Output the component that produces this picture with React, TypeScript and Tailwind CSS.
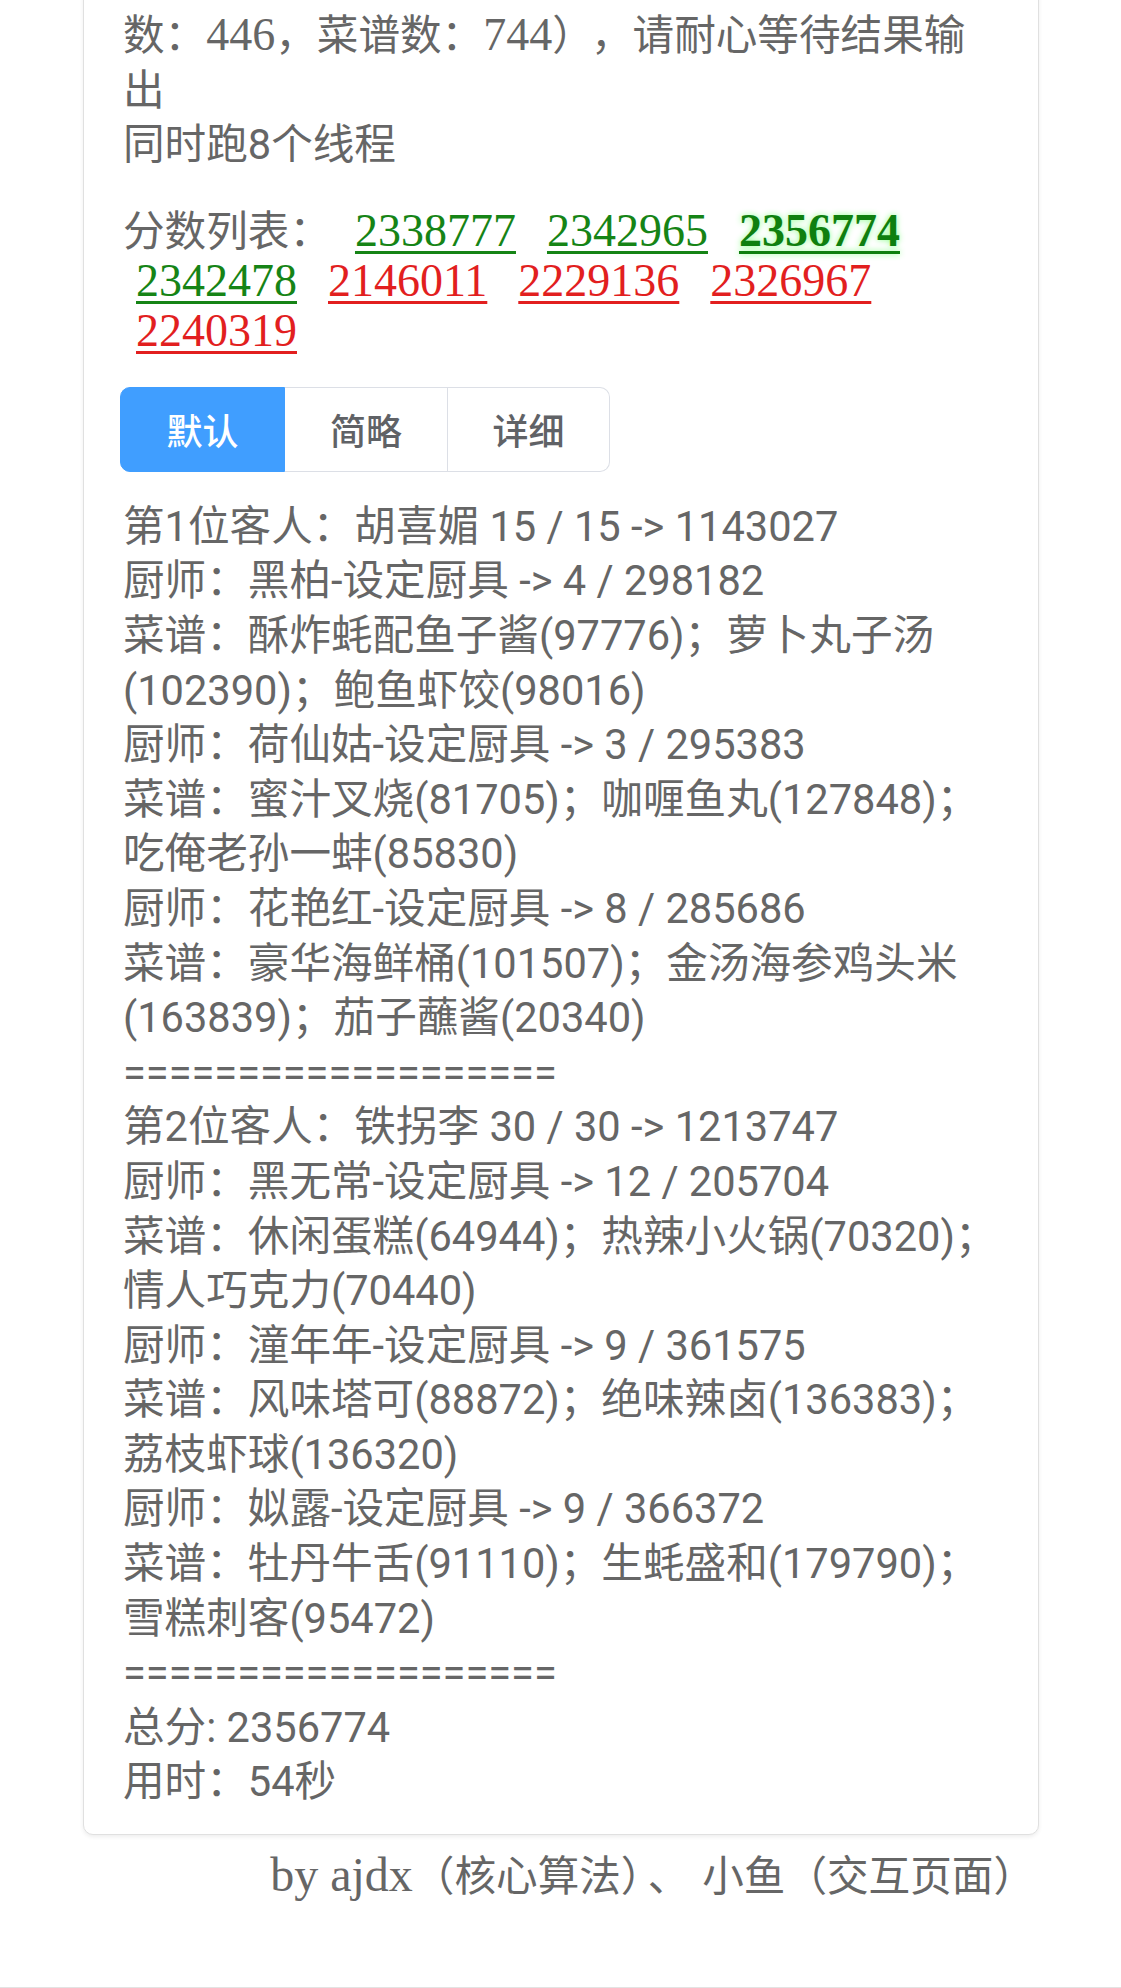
import React from "react";

const sans = "font-['Roboto','Noto_Sans_CJK_SC',sans-serif]";

type Score = { v: string; good: boolean; best?: boolean };

const scores: Score[] = [
  { v: "2338777", good: true },
  { v: "2342965", good: true },
  { v: "2356774", good: true, best: true },
  { v: "2342478", good: true },
  { v: "2146011", good: false },
  { v: "2229136", good: false },
  { v: "2326967", good: false },
  { v: "2240319", good: false },
];

const lines: string[] = [
  "第1位客人：胡喜媚 15 / 15 -> 1143027",
  "厨师：黑柏-设定厨具 -> 4 / 298182",
  "菜谱：酥炸蚝配鱼子酱(97776)；萝卜丸子汤",
  "(102390)；鲍鱼虾饺(98016)",
  "厨师：荷仙姑-设定厨具 -> 3 / 295383",
  "菜谱：蜜汁叉烧(81705)；咖喱鱼丸(127848)；",
  "吃俺老孙一蚌(85830)",
  "厨师：花艳红-设定厨具 -> 8 / 285686",
  "菜谱：豪华海鲜桶(101507)；金汤海参鸡头米",
  "(163839)；茄子蘸酱(20340)",
  "===================",
  "第2位客人：铁拐李 30 / 30 -> 1213747",
  "厨师：黑无常-设定厨具 -> 12 / 205704",
  "菜谱：休闲蛋糕(64944)；热辣小火锅(70320)；",
  "情人巧克力(70440)",
  "厨师：潼年年-设定厨具 -> 9 / 361575",
  "菜谱：风味塔可(88872)；绝味辣卤(136383)；",
  "荔枝虾球(136320)",
  "厨师：姒露-设定厨具 -> 9 / 366372",
  "菜谱：牡丹牛舌(91110)；生蚝盛和(179790)；",
  "雪糕刺客(95472)",
  "===================",
  "总分: 2356774",
  "用时：54秒",
];

export default function App() {
  return (
    <div className="w-[1121px] h-[1988px] overflow-hidden bg-white flex flex-col text-[#666666]">
      <div className="ml-[83px] w-[956px] -mt-[31px] border border-[#e0e0e0] rounded-[10px] shadow-[0_2px_4px_rgba(0,0,0,0.07)] px-[39px] pt-[39px] pb-[24px] bg-white">
        <div className="font-['Liberation_Serif','Noto_Sans_CJK_SC',serif] text-[41.6px] leading-[54.6px] whitespace-nowrap">
          <div>
            数：<span className="text-[46px] leading-[0]">446</span>，菜谱数：
            <span className="text-[46px] leading-[0]">744</span>）<span className="ml-[18px]">，请耐心等待结果输</span>
          </div>
          <div>出</div>
        </div>
        <div className={`${sans} text-[41.6px] leading-[54.6px] whitespace-nowrap`}>同时跑8个线程</div>

        <div className={`${sans} mt-[33px] text-[41.6px] leading-[49px]`}>
          <span className="mr-[11px]">分数列表：</span>
          {scores.map((s) => (
            <a
              key={s.v}
              href="#"
              className={
                s.best
                  ? "inline-block ml-[13px] mr-[18px] font-['Liberation_Serif',serif] text-[46px] leading-[49px] font-bold text-[#0f7f0f] underline decoration-[3px] underline-offset-[5px] [text-shadow:0_0_6px_#8dff8d]"
                  : s.good
                  ? "inline-block ml-[13px] mr-[18px] font-['Liberation_Serif',serif] text-[46px] leading-[49px] text-[#168416] underline decoration-[3px] underline-offset-[5px]"
                  : "inline-block ml-[13px] mr-[18px] font-['Liberation_Serif',serif] text-[46px] leading-[49px] text-[#e21f1f] underline decoration-[3px] underline-offset-[5px]"
              }
            >
              {s.v}
            </a>
          ))}
        </div>

        <div className="mt-[31px] -ml-[3px] flex w-fit font-['Noto_Sans_CJK_SC',sans-serif] font-medium text-[36px]">
          <div className="w-[165px] h-[85px] flex items-center justify-center bg-[#409eff] border border-[#409eff] text-white rounded-l-[10px]">
            默认
          </div>
          <div className="w-[163px] h-[85px] flex items-center justify-center border-y border-r border-[#dcdfe6] text-[#606266]">
            简略
          </div>
          <div className="w-[162px] h-[85px] flex items-center justify-center border-y border-r border-[#dcdfe6] rounded-r-[10px] text-[#606266]">
            详细
          </div>
        </div>

        <div className={`${sans} mt-[28px] text-[41.6px] leading-[54.6px] whitespace-nowrap`}>
          {lines.map((l, i) => (
            <div key={i}>{l}</div>
          ))}
        </div>
      </div>

      <div className="ml-[83px] w-[956px] pr-[4px] mt-[15px] text-right font-['Liberation_Serif','Noto_Sans_CJK_SC',serif] text-[41.6px] leading-[54.6px] whitespace-nowrap">
        <span className="text-[48px] leading-[0]">by ajdx</span>（核心算法）<span className="ml-[6px] mr-[13px]">、</span>小鱼（交互页面）
      </div>
      <div className="flex-1" />
      <div className="h-[1px] bg-[#e3e3e3]" />
    </div>
  );
}
